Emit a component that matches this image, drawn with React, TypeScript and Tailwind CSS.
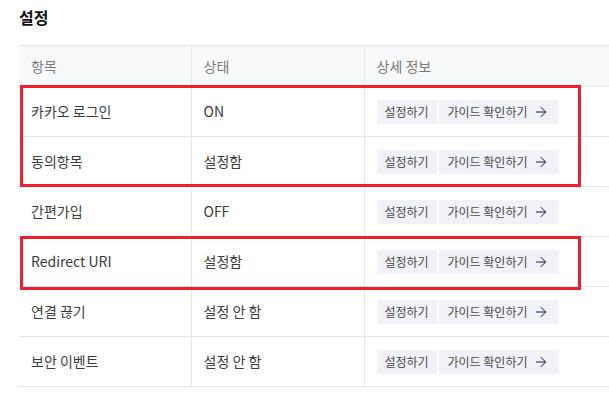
import { ArrowRight } from 'lucide-react';

const ROWS: { name: string; state: string }[] = [
  { name: '카카오 로그인', state: 'ON' },
  { name: '동의항목', state: '설정함' },
  { name: '간편가입', state: 'OFF' },
  { name: 'Redirect URI', state: '설정함' },
  { name: '연결 끊기', state: '설정 안 함' },
  { name: '보안 이벤트', state: '설정 안 함' },
];

const FONT = { fontFamily: '"Noto Sans CJK KR", "Noto Sans", sans-serif' };

export default function App() {
  return (
    <div className="relative h-[408px] w-[609px] overflow-hidden bg-white pl-[19px]" style={FONT}>
      <h2 className="pt-[5px] text-[16px] font-bold leading-[24px] text-[#111]">설정</h2>

      <table className="mt-[16px] w-[590px] table-fixed border-collapse text-[14px] text-[#3c3c3c]">
        <colgroup>
          <col className="w-[172px]" />
          <col className="w-[173px]" />
          <col />
        </colgroup>
        <thead>
          <tr className="h-[41px] border-y border-[#e6e6e6] bg-[#f8f9fa] text-left text-[#7a7a7a]">
            <th className="pl-[12px] font-normal">항목</th>
            <th className="border-l border-[#e6e6e6] pl-[12px] font-normal">상태</th>
            <th className="border-l border-[#e6e6e6] pl-[12px] font-normal">상세 정보</th>
          </tr>
        </thead>
        <tbody>
          {ROWS.map(r => (
            <tr key={r.name} className="h-[50px] border-b border-[#e6e6e6]">
              <td className="pl-[12px]">{r.name}</td>
              <td className="border-l border-[#e6e6e6] pl-[12px]">{r.state}</td>
              <td className="border-l border-[#e6e6e6] pl-[12px]">
                <div className="flex gap-[2px]">
                  <button className="flex h-[24px] w-[60px] items-center justify-center bg-[#f1f2f8] text-[12px] text-[#484848]">
                    설정하기
                  </button>
                  <button className="flex h-[24px] w-[120px] items-center justify-center gap-[6px] bg-[#f1f2f8] text-[12px] text-[#484848]">
                    가이드 확인하기
                    <ArrowRight size={16} strokeWidth={1.5} color="#141a55" />
                  </button>
                </div>
              </td>
            </tr>
          ))}
        </tbody>
      </table>

      {/* annotation boxes */}
      <div className="pointer-events-none absolute left-[20px] top-[85px] h-[102px] w-[561px] border-[3px] border-[#ec1f2b]" />
      <div className="pointer-events-none absolute left-[20px] top-[236px] h-[54px] w-[561px] border-[3px] border-[#ec1f2b]" />
    </div>
  );
}
